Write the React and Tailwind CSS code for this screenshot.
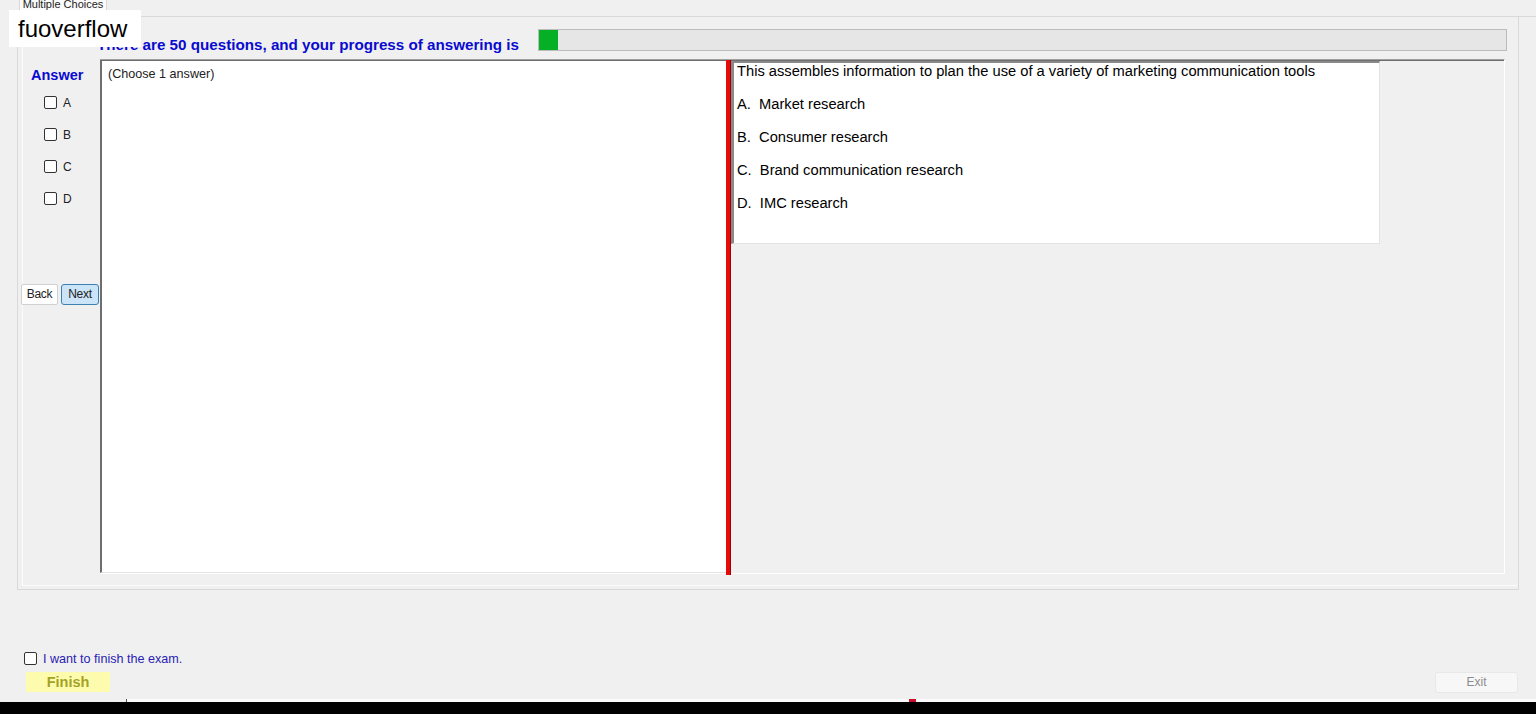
import React from 'react'

const OPTIONS = ['A.  Market research', 'B.  Consumer research', 'C.  Brand communication research', 'D.  IMC research']

function Box() {
  return <span className="block w-[13px] h-[13px] border border-[#333333] rounded-[2px] bg-white shrink-0" />
}

export default function App() {
  return (
    <div
      className="relative w-[1536px] h-[714px] bg-[#f0f0f0] overflow-hidden flex flex-col text-black"
      style={{ fontFamily: '"Liberation Sans", Arial, sans-serif' }}
    >
      {/* tab strip */}
      <div className="h-[17px] flex shrink-0">
        <div className="ml-[19px] w-[88px] h-[17px] bg-[#fbfbfb] border-x border-[#d9d9d9] overflow-hidden text-center text-[11px] leading-[9px] text-[#222]">
          Multiple Choices
        </div>
        <div className="flex-1 border-b border-[#d9d9d9] mt-auto" />
      </div>

      {/* tab page */}
      <div className="ml-[17px] w-[1502px] h-[573px] border border-t-0 border-[#d9d9d9] shrink-0">
        <div className="ml-[4px] mr-[1px] h-[569px] border-l border-b border-[#fcfcfc]">
          {/* header */}
          <div className="flex items-start pt-[12px] h-[34px]">
            <div className="pl-[74px] w-[515px] pt-[7px] text-[15.2px] leading-[17px] font-bold text-[#0a0ad0] whitespace-nowrap">
              There are 50 questions, and your progress of answering is
            </div>
            <div className="w-[969px] h-[22px] bg-[#e6e6e6] border border-[#bcbcbc] flex">
              <div className="w-[19px] h-full bg-[#06b025]" />
            </div>
          </div>

          {/* body */}
          <div className="flex mt-[8px]">
            {/* answer column */}
            <div className="w-[77px] flex flex-col">
              <div className="mt-[8px] pl-[8px] text-[14.5px] leading-[16px] font-bold text-[#0a0ad0]">Answer</div>
              <div className="mt-[13px] flex flex-col gap-[19px] pl-[21px]">
                {['A', 'B', 'C', 'D'].map(l => (
                  <label key={l} className="flex items-center h-[13px] gap-[6px] text-[12px] text-[#222]">
                    <Box />
                    {l}
                  </label>
                ))}
              </div>
              <div className="mt-[79px] -ml-[2px] flex gap-[3px]">
                <button className="w-[37px] h-[21px] bg-white border border-[#d0d0d0] rounded-[2px] text-[12px] leading-[19px] tracking-[-0.3px] text-[#222]">Back</button>
                <button className="w-[38px] h-[21px] bg-[#cce4f7] border border-[#3c7fb1] rounded-[3px] text-[12px] leading-[19px] tracking-[-0.3px] text-[#222]">Next</button>
              </div>
            </div>

            {/* question area */}
            <div className="w-[1405px] h-[515px] flex border-t border-[#a0a0a0] border-b border-r border-b-white border-r-white">
              <div className="w-[626px] h-full bg-white border-t border-l-2 border-[#6e6e6e] border-b border-b-[#e3e3e3] pl-[6px] pt-[6px] text-[12.6px] leading-[14px] text-[#222]">
                (Choose 1 answer)
              </div>
              <div className="w-[5px] h-[515px] bg-[#e30b0b] border-r border-[#a00000]" />
              <div className="flex-1 h-full bg-[#f0f0f0] border-t border-[#6e6e6e]">
                <div className="w-[649px] h-[183px] bg-white border-t-2 border-l-[3px] border-[#8a8a8a] border-r border-b border-r-[#e3e3e3] border-b-[#e3e3e3] pl-[3px] text-[14.7px] leading-[16px]">
                  <p>This assembles information to plan the use of a variety of marketing communication tools</p>
                  {OPTIONS.map(o => (
                    <p key={o} className="mt-[17px] whitespace-pre">{o}</p>
                  ))}
                </div>
              </div>
            </div>
          </div>
        </div>
      </div>

      {/* bottom controls */}
      <label className="mt-[62px] ml-[24px] flex items-center gap-[6px] h-[13px] text-[12.6px] leading-[13px] text-[#2a22b4]">
        <Box />
        <span className="pt-[2px]">I want to finish the exam.</span>
      </label>
      <div className="mt-[7px] flex justify-between">
        <button className="ml-[26px] w-[84px] h-[20px] bg-[#fdfcae] text-[14.5px] font-bold text-[#a3a324] leading-[20px]">Finish</button>
        <button className="mr-[18px] w-[83px] h-[21px] bg-[#f7f7f7] border border-[#e8e8e8] rounded-[3px] text-[12px] text-[#8c8c8c] leading-[19px]">Exit</button>
      </div>

      <div className="mt-auto h-[3px] flex">
        <div className="w-[126px]" />
        <div className="flex-1 bg-[#fafafa] border-l border-[#555] relative">
          <span className="absolute left-[782px] top-0 w-[7px] h-[3px] bg-[#c8102e]" />
        </div>
      </div>
      <div className="h-[12px] bg-black shrink-0" />

      {/* watermark overlay */}
      <div className="absolute left-[9px] top-[10px] w-[132px] h-[37px] bg-white pl-[9px] text-[24px] leading-[37px] text-black">
        fuoverflow
      </div>
    </div>
  )
}
